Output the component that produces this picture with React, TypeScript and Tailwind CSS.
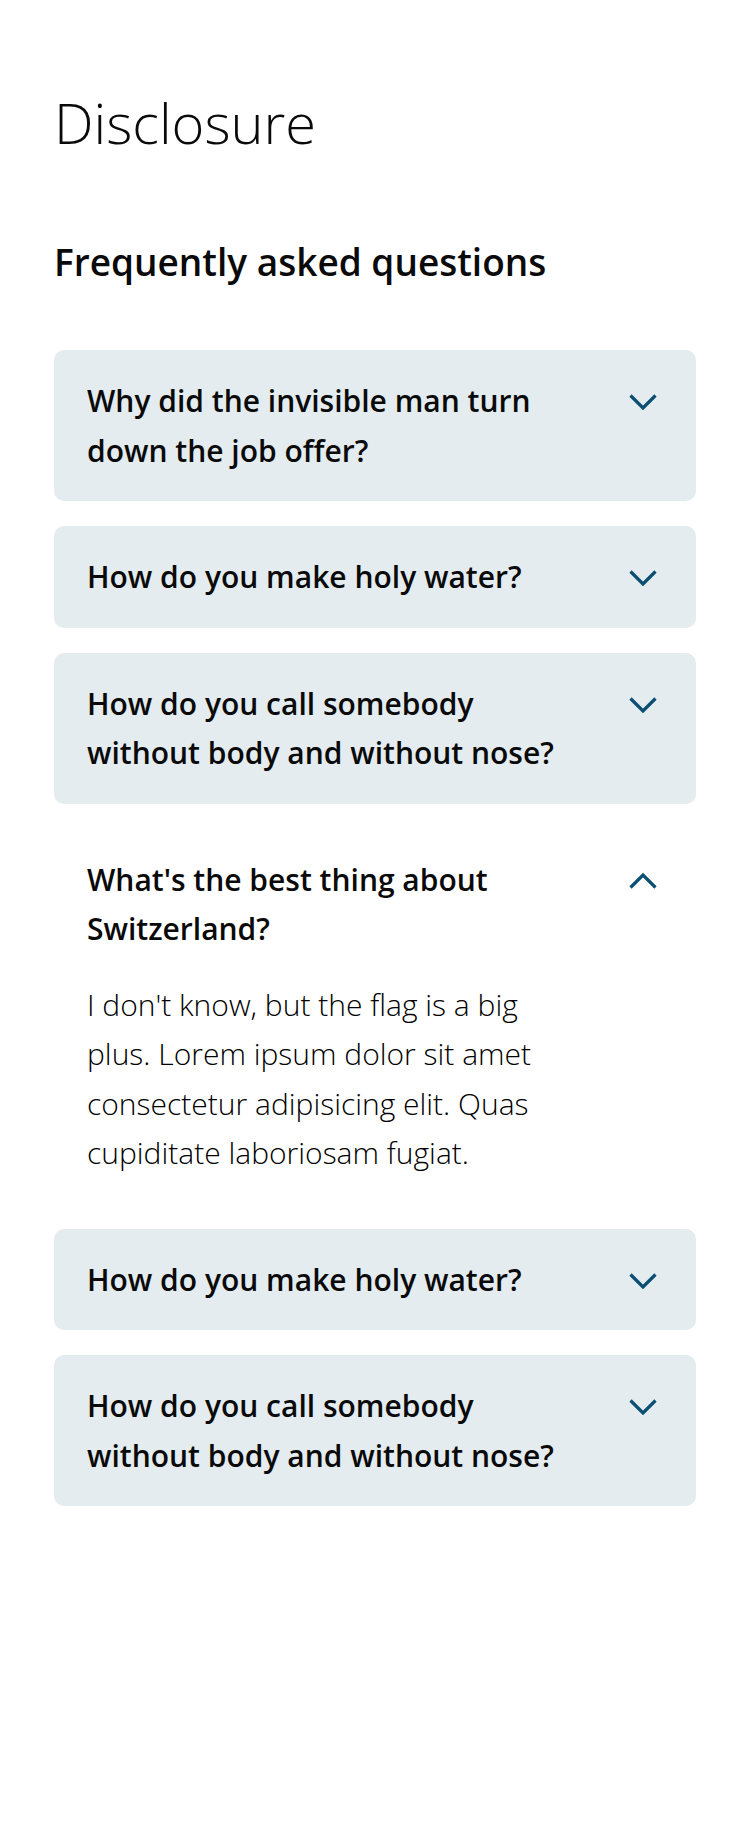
import React from 'react';

type Item = {
  question: string;
  answer?: string;
  open?: boolean;
};

const items: Item[] = [
  { question: 'Why did the invisible man turn down the job offer?' },
  { question: 'How do you make holy water?' },
  { question: 'How do you call somebody without body and without nose?' },
  {
    question: "What's the best thing about Switzerland?",
    answer:
      "I don't know, but the flag is a big plus. Lorem ipsum dolor sit amet consectetur adipisicing elit. Quas cupiditate laboriosam fugiat.",
    open: true,
  },
  { question: 'How do you make holy water?' },
  { question: 'How do you call somebody without body and without nose?' },
];

const Chevron: React.FC<{ up?: boolean }> = ({ up }) => (
  <svg width="28" height="16" viewBox="0 0 28 16" fill="none" className="shrink-0">
    <polyline
      points={up ? '1.5,14.5 14,2 26.5,14.5' : '1.5,1.5 14,14 26.5,1.5'}
      stroke="#0b4f72"
      strokeWidth="3.2"
    />
  </svg>
);

const App: React.FC = () => {
  return (
    <div
      className="min-h-[1842px] bg-white px-[54px] pt-[94px] text-[#0a0a0a]"
      style={{ fontFamily: '"Open Sans", "Noto Sans", sans-serif' }}
    >
      <h1 className="text-[56px] font-light leading-none">Disclosure</h1>
      <h2 className="mt-[93px] text-[37px] font-semibold leading-none">
        Frequently asked questions
      </h2>

      <div className="mt-[70px] flex flex-col gap-[25px]">
        {items.map((item, i) => (
          <div
            key={i}
            className={
              item.open
                ? 'rounded-[10px] pb-[26px] pl-[33px] pr-[39px] pt-[26px]'
                : 'rounded-[10px] bg-[#e4ecf0] pb-[26px] pl-[33px] pr-[39px] pt-[26px]'
            }
          >
            <div className="flex items-start justify-between">
              <p className="w-[485px] text-[30px] font-semibold leading-[49.5px]">
                {item.question}
              </p>
              <div className="mt-[18px]">
                <Chevron up={item.open} />
              </div>
            </div>
            {item.open && item.answer && (
              <p className="mt-[26px] w-[490px] text-[30px] font-light leading-[49.5px] text-black">
                {item.answer}
              </p>
            )}
          </div>
        ))}
      </div>
    </div>
  );
};

export default App;
